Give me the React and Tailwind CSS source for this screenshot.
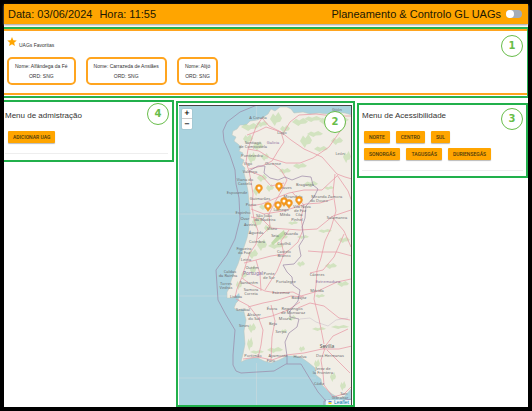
import React from "react";

const favourites = ["Alfândega da Fé", "Carrazeda de Ansiães", "Alijó"];
const regions = [
  ["NORTE", "CENTRO", "SUL"],
  ["SONORGÁS", "TAGUSGÁS", "DURIENSEGÁS"],
];

const coast =
  "M287 107 L280 107 275 111 271 109 268 114 262 118 257 120 250 121 246 125 240 125 237 129 233 131 232 135 236 137 234 141 238 144 241 147 239 151 243 153 240 158 244 160 242 165 245 168 244 173 246 181 248 191 249 202 250 211 249 221 249 229 247 238 244 247 241 255 238 264 234 273 231 281 230 287 227 292 227 298 233 298 236 296 239 300 236 303 234 308 239 311 244 312 246 320 244 331 245 344 243 354 241 362 245 360 252 358 258 358 264 361 271 363 279 360 287 356 295 356 302 358 309 363 315 368 316 375 321 379 322 385 328 391 332 394 339 398 344 397 352 388 352 115 345 113 335 112 328 114 319 113 310 114 303 112 294 113 291 109Z";

const greens = [
  [250, 127, 9, 4], [262, 124, 6, 3], [276, 119, 6, 7], [285, 129, 5, 4], [300, 122, 8, 4], [313, 119, 9, 3],
  [326, 121, 7, 4], [341, 120, 8, 3], [248, 139, 5, 5], [258, 146, 5, 5], [252, 158, 4, 6], [265, 157, 4, 4],
  [306, 141, 6, 7], [315, 134, 8, 3], [321, 149, 7, 3], [337, 141, 6, 4], [300, 166, 7, 3], [285, 171, 6, 3],
  [262, 178, 5, 4], [257, 191, 4, 5], [270, 188, 4, 4], [311, 184, 7, 3], [329, 188, 5, 2], [347, 157, 4, 6],
  [264, 207, 5, 3], [257, 222, 5, 6], [268, 228, 4, 4], [282, 237, 6, 3], [276, 246, 8, 3], [262, 245, 5, 6],
  [253, 254, 5, 5], [293, 223, 5, 2], [303, 237, 6, 2], [325, 231, 7, 2], [344, 240, 6, 3], [253, 270, 3, 5],
  [244, 275, 3, 4], [301, 264, 4, 3], [331, 266, 6, 3], [343, 284, 6, 3], [320, 296, 5, 2], [239, 285, 3, 5],
  [252, 328, 4, 5], [250, 344, 3, 7], [257, 352, 7, 2], [275, 350, 8, 3], [292, 318, 4, 3], [284, 331, 3, 2],
  [319, 329, 7, 2], [340, 327, 9, 2], [317, 364, 3, 5], [333, 377, 3, 5], [343, 386, 3, 5], [302, 349, 3, 3],
];

const roads = [
  "M262 118 L256 127 252 138 248 149 246 162 249 171 251 181 253 194 252 207 254 219 258 231 256 244 250 253 246 264 242 277 237 289 235 297",
  "M262 118 L269 126 281 132 284 142 278 151 272 161 262 166 249 169",
  "M284 132 L290 122 299 115 316 114 333 116 351 116",
  "M281 132 L291 140 304 149 322 157 337 174 345 177 352 179",
  "M272 163 L281 170 287 180 282 190 275 202 269 214 270 227 258 239",
  "M250 206 L262 204 276 198 289 193 304 190 322 190 337 176",
  "M248 149 L259 151 270 158 286 163 300 163 313 158 329 147 346 123",
  "M251 217 L262 219 271 228 285 229 300 230 317 229 333 216 351 210",
  "M335 174 L333 192 336 211 331 228 325 241 321 258 317 270 316 285 314 299 319 319 324 344",
  "M244 263 L256 260 271 256 285 254 298 242 303 230",
  "M242 278 L250 284 265 291 277 293 293 292 301 296 318 291 337 282 351 279",
  "M236 299 L249 306 259 319 263 330 261 345 258 358",
  "M248 307 L263 303 278 300 291 296 304 297",
  "M243 359 L258 357 272 360 286 355 304 353 322 349 339 349 352 346",
  "M325 348 L321 360 323 373 324 385 333 397 344 394 352 386",
  "M327 350 L337 360 350 373", "M323 349 L333 336 348 329", "M298 308 L310 303 324 306 339 318 350 320",
  "M259 319 L272 316 288 310 300 302", "M271 305 L275 321 272 337 271 360",
  "M256 260 L260 274 261 291", "M289 230 L281 241 284 254 277 271 265 290",
  "M344 234 L334 257 323 270 310 273", "M333 218 L344 231 351 247", "M337 175 L348 191 352 202",
  "M308 251 L321 252 337 252 352 256", "M292 192 L304 205 301 218 303 230", "M251 209 L264 214 283 211 293 208 306 204 320 203 333 199",
  "M247 135 L258 131 266 127 281 132", "M249 171 L262 176 271 186 284 183",
];

const labels = [
  [258, 119, "A Coruña"], [282, 134, "Lugo"], [253, 144, "Santiago"], [253, 148, "de Compostela"], [252, 157, "Pontevedra"],
  [248, 165, "Vigo"], [273, 165, "Ourense"], [250, 173, "Valença"], [245, 181, "Viana do"], [245, 185, "Castelo"],
  [237, 194, "Esposende"], [260, 200, "Guimarães"], [285, 189, "Chaves"], [305, 186, "Bragança"], [293, 198, "Mirandela"],
  [319, 198, "Miranda"], [319, 202, "do Douro"], [335, 198, "Zamora"], [340, 155, "León"], [251, 206, "Porto"],
  [243, 214, "Espinho"], [245, 220, "Ovar"], [264, 217, "São João"], [265, 221, "da Madeira"], [281, 211, "Lamego"],
  [285, 216, "Mêda"], [302, 208, "Vila Nova"], [300, 212, "de Foz"], [299, 216, "Côa"], [297, 221, "Pinhel"],
  [250, 226, "Aveiro"], [256, 234, "Águeda"], [272, 230, "Viseu"], [275, 237, "Seia"], [291, 235, "Guarda"],
  [257, 243, "Coimbra"], [284, 245, "Covilhã"], [337, 219, "Salamanca"], [244, 250, "Figueira"], [244, 254, "da Foz"],
  [246, 261, "Leiria"], [284, 253, "Castelo"], [284, 257, "Branco"], [252, 269, "Ourém"], [230, 273, "Caldas"],
  [228, 277, "da Rainha"], [269, 275, "Ponte"], [269, 279, "de Sor"], [286, 283, "Portalegre"], [317, 276, "Cáceres"],
  [226, 285, "Torres"], [226, 289, "Vedras"], [249, 284, "Santarém"], [251, 291, "Samora"], [251, 295, "Correia"],
  [281, 294, "Estremoz"], [317, 292, "Mérida"], [299, 299, "Badajoz"], [236, 298, "Lisboa"], [243, 311, "Setúbal"],
  [272, 310, "Évora"], [292, 310, "Reguengos"], [293, 314, "de Monsaraz"], [254, 316, "Alcácer"], [254, 320, "do Sal"],
  [285, 320, "Moura"], [244, 327, "Sines"], [273, 325, "Beja"], [281, 333, "Serpa"], [253, 357, "Portimão"],
  [271, 362, "Faro"], [278, 357, "Ayamonte"], [300, 358, "Huelva"], [330, 357, "Dos Hermanas"], [323, 370, "Jerez de"],
  [323, 374, "la Frontera"], [319, 385, "Cádiz"], [344, 395, "San"], [340, 399, "Gibraltar"], [337, 111, "Gijón"],
];

const pins = [[259, 193], [279, 191], [268, 211], [278, 210], [284, 206], [289, 208], [299, 205]];

function MapDrawing() {
  return (
    <svg
      viewBox="179 106 172 299"
      preserveAspectRatio="xMidYMid slice"
      className="absolute inset-0 size-full bg-[#aad3df]"
      role="img"
      aria-label="Mapa de Portugal"
    >
      <path d={coast} fill="#f1eee6" stroke="#b9c5bd" strokeWidth=".5" />
      <g fill="#bfdca8" opacity=".6">
        {greens.map(([x, y, rx, ry]) => (
          <path
            key={`${x}-${y}`}
            d={`M${x - rx} ${y} l${rx * 0.5} ${-ry * 0.8} ${rx * 0.4} ${ry * 0.4} ${rx * 0.5} ${-ry * 0.6} ${rx * 0.6} ${ry * 0.9} ${-rx * 0.3} ${ry * 0.5} ${-rx * 0.6} ${ry * 0.1} ${-rx * 0.3} ${ry * 0.5}z`}
          />
        ))}
      </g>
      <path d="M271 243 L278 235 284 230 285 234 278 241 273 245Z" fill="#b5d79b" opacity=".8" />
      <path d="M235 297 L239 293 240 297 236 301Z M238 310 L245 309 244 312Z" fill="#aad3df" />
      <g fill="none" stroke="#e79aa6" strokeWidth=".75" strokeLinejoin="round">
        {roads.map((d) => <path key={d} d={d} />)}
      </g>
      <g stroke="#e5dfdc" strokeWidth=".5" opacity=".7">
        <path d="M179 214H250M179 296H227M179 378H316M256.500 363V406M256.500 106V120M338.500 398V406" />
      </g>
      <g fill="none" stroke="#9b86a6" strokeWidth=".7">
        <path d="M257 105 L240 112 227 122 223 131 224 141 230 155 235 170 236 184 239 198 240 219 235 239 227 255 216 270 218 300 226 315 235 330 233 355 233 365 236 371 241 373 274 371 286 364 301 364 307 374 318 392 325 400 333 402 352 399" />
        <path d="M324 406 L324 401 330 400" />
        <path d="M249 171 L258 166 265 166 264 173 270 178 278 180 285 177 292 180 302 176 311 177 313 185 318 189 314 197 306 206 305 218 302 227 304 238 299 246 301 256 294 264 283 265 287 272 292 277 293 285 300 290 298 301 290 311 290 317 299 319 297 327 289 333 285 342 287 356 287 364" />
        <path d="M300 319 L310 318 316 322 328 326 336 320 348 318" strokeWidth=".5" opacity=".5" />
      </g>
      <g
        fill="#6b6b6e"
        fontSize="4"
        textAnchor="middle"
        className="font-['Noto_Sans',sans-serif]"
      >
        {labels.map(([x, y, name]) => <text key={`${name}-${y}`} x={x} y={y}>{name}</text>)}
      </g>
      <g textAnchor="middle" className="font-['Noto_Sans',sans-serif]" fill="#8b6f9b">
        <text x="253" y="275" fontSize="5">Portugal</text>
        <text x="328" y="283" fontSize="4">Extremadura</text>
        <text x="273" y="144" fontSize="4">Galicia</text>
        <text x="327" y="348" fontSize="5" fill="#555">Sevilla</text>
      </g>
      {pins.map(([x, y]) => (
        <g key={`${x}-${y}`} transform={`translate(${x} ${y})`}>
          <path d="M0 .5 C-1 -1.500 -3.500 -3 -3.500 -5 A3.500 3.500 0 0 1 3.500 -5 C3.500 -3 1 -1.500 0 .5Z" fill="#f69a1e" stroke="#dd8418" strokeWidth=".4" />
          <circle cy="-5" r="1.500" fill="#fff" />
        </g>
      ))}
    </svg>
  );
}

function Badge({ children, className }) {
  return (
    <span
      className={`absolute flex size-[22px] items-center justify-center rounded-full border border-[#68bd4a] bg-white font-['DejaVu_Sans',sans-serif] text-[10px] leading-none font-bold text-[#68bd4a] ${className}`}
    >
      {children}
    </span>
  );
}

function ActionButton({ children }) {
  return (
    <button
      type="button"
      className="h-3 rounded-[1px] bg-[#ffa500] px-[5px] font-['Roboto',sans-serif] text-[5px] leading-3 font-medium whitespace-nowrap text-[#4a380c] shadow-[0_1px_1px_#bbbbbb]"
    >
      {children}
    </button>
  );
}

export default function App() {
  return (
    <div className="flex min-h-screen flex-col bg-black p-1 font-['Liberation_Sans',Arial,sans-serif] text-[#333333]">
      <div className="flex flex-1 flex-col bg-white">
        <header className="flex h-5 items-center justify-between bg-[#ffa500] pr-1.5 pl-1 text-[11px] leading-5 text-[#211803] shadow-[0_1px_2px_#999999]">
          <p className="flex gap-[7px]">
            <span>Data: 03/06/2024</span>
            <span>Hora: 11:55</span>
          </p>
          <div className="flex items-center gap-[5px]">
            <h1>Planeamento &amp; Controlo GL UAGs</h1>
            <input
              type="checkbox"
              role="switch"
              aria-label="Alternar modo"
              className="flex h-2 w-4 appearance-none items-center rounded-full bg-[#a5adb8] before:size-2 before:rounded-full before:bg-white checked:justify-end"
            />
          </div>
        </header>

        <section className="relative mt-[3px] border-y-2 border-r border-[#27b04f] pb-px">
          <div className="border-y-2 border-[#ffa51f] px-[3px] pt-1.5 pb-2">
            <h2 className="flex h-5 items-start gap-0.5 text-[5px]">
              <svg viewBox="2 2 20 19" className="h-[9px] w-[10px]" fill="#ffa500" aria-hidden="true">
                <path d="M12 17.270 18.180 21l-1.640-7.030L22 9.240l-7.190-.61L12 2 9.190 8.630 2 9.240l5.460 4.730L5.820 21z" />
              </svg>
              <span className="pt-1 leading-2">UAGs Favoritas</span>
            </h2>
            <ul className="flex gap-2.5">
              {favourites.map((name) => (
                <li
                  key={name}
                  className="rounded-[5px] border-2 border-[#ffa51f] px-1.5 py-0.5 text-center text-[5px] leading-[10px]"
                >
                  <p>Nome: {name}</p>
                  <p>ORD: SNG</p>
                </li>
              ))}
            </ul>
          </div>
          <Badge className="top-1.5 right-1">1</Badge>
        </section>

        <main className="grid flex-1 grid-cols-[170fr_179fr_171fr] items-start gap-x-0.5">
          <section className="relative mt-0.5 border-y-2 border-r-2 border-[#21b04b] pr-1 pb-1.5 pl-px">
            <h2 className="pt-2 text-[8px] leading-3">Menu de admistração</h2>
            <div className="mt-[9px] flex pl-[3px]">
              <ActionButton>ADICIONAR UAG</ActionButton>
            </div>
            <hr className="mt-2.5 border-[#eeeeee]" />
            <Badge className="top-px right-[3px]">4</Badge>
          </section>

          <section className="mt-[3px] flex self-stretch border-2 border-[#21b04b] px-px pt-0.5">
            <div className="relative flex-1 overflow-hidden border-t border-r border-[#444444]">
              <MapDrawing />
              <div className="absolute top-[3px] left-[3px] flex w-2.5 flex-col divide-y divide-[#cccccc] rounded-[1px] bg-white font-['DejaVu_Sans',sans-serif] text-[7px] font-bold text-black shadow-[0_0_1px_#777777]">
                <button type="button" aria-label="Aumentar zoom" className="h-[10px] leading-[9px]">+</button>
                <button type="button" aria-label="Diminuir zoom" className="h-[10px] leading-[9px]">−</button>
              </div>
              <Badge className="top-[5px] right-[5px]">2</Badge>
              <a
                href="#leaflet"
                className="absolute right-0 bottom-0 flex h-[5px] items-center gap-0.5 bg-white/80 px-0.5 text-[5px] leading-none text-[#0078a8]"
              >
                <svg viewBox="0 0 4 4" className="h-[3px] w-1" aria-hidden="true">
                  <path fill="#4c7be1" d="M0 0h4v2H0z" />
                  <path fill="#ffd500" d="M0 2h4v2H0z" />
                </svg>
                Leaflet
              </a>
            </div>
          </section>

          <section className="relative mt-[5px] border-2 border-[#21b04b] px-[3px] pb-[5px]">
            <h2 className="pt-[5px] text-[8px] leading-3">Menu de Acessibilidade</h2>
            <div className="mt-[9px] flex flex-col gap-[5px] pl-0.5">
              {regions.map((row) => (
                <div key={row[0]} className="flex gap-1.5">
                  {row.map((name) => <ActionButton key={name}>{name}</ActionButton>)}
                </div>
              ))}
            </div>
            <hr className="mt-2.5 border-[#eeeeee]" />
            <Badge className="top-[3px] right-[3px]">3</Badge>
          </section>
        </main>
      </div>
    </div>
  );
}
